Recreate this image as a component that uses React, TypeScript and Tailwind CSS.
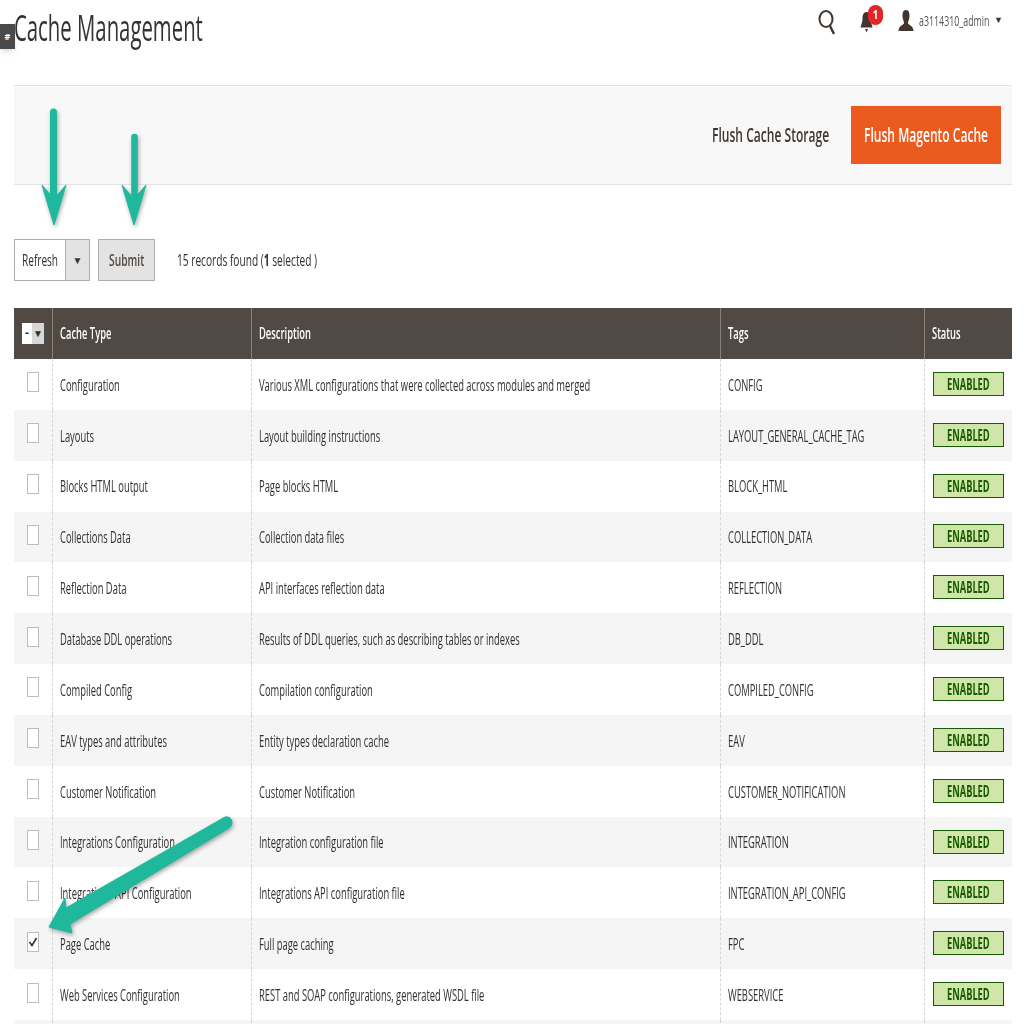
import { ReactNode } from 'react'

const rows = [
  ['Configuration', 'Various XML configurations that were collected across modules and merged', 'CONFIG'],
  ['Layouts', 'Layout building instructions', 'LAYOUT_GENERAL_CACHE_TAG'],
  ['Blocks HTML output', 'Page blocks HTML', 'BLOCK_HTML'],
  ['Collections Data', 'Collection data files', 'COLLECTION_DATA'],
  ['Reflection Data', 'API interfaces reflection data', 'REFLECTION'],
  ['Database DDL operations', 'Results of DDL queries, such as describing tables or indexes', 'DB_DDL'],
  ['Compiled Config', 'Compilation configuration', 'COMPILED_CONFIG'],
  ['EAV types and attributes', 'Entity types declaration cache', 'EAV'],
  ['Customer Notification', 'Customer Notification', 'CUSTOMER_NOTIFICATION'],
  ['Integrations Configuration', 'Integration configuration file', 'INTEGRATION'],
  ['Integrations API Configuration', 'Integrations API configuration file', 'INTEGRATION_API_CONFIG'],
  ['Page Cache', 'Full page caching', 'FPC'],
  ['Web Services Configuration', 'REST and SOAP configurations, generated WSDL file', 'WEBSERVICE'],
  ['', '', ''],
]

// the screenshot is squashed horizontally, so all text gets narrowed
function T({ children, scale = 'scale-x-[0.605]' }: { children: ReactNode; scale?: string }) {
  return <span className={`inline-block origin-left whitespace-nowrap ${scale}`}>{children}</span>
}

function Arrows() {
  return (
    <svg className="absolute inset-0 pointer-events-none drop-shadow-[1px_2px_2px_rgba(0,0,0,0.35)]" width="1024" height="1024" viewBox="0 0 1024 1024">
      <g fill="#1fb89c" stroke="#1fb89c" strokeLinejoin="round">
        <path d="M53.5 112 L53.5 195" strokeWidth="7" strokeLinecap="round" />
        <path d="M42 185 L54 199 L66 185 L54 225 Z" strokeWidth="1" />
        <path d="M134.5 137 L134.5 195" strokeWidth="6.5" strokeLinecap="round" />
        <path d="M122 185 L134 199 L146 185 L134 225 Z" strokeWidth="1" />
        <path d="M49 927 L65 898 L66 908 L225 817 Q231 816 232 822 Q232 826 229 828 L70 924 L72 933 Z" strokeWidth="1" />
      </g>
    </svg>
  )
}

function Checkbox({ checked }: { checked: boolean }) {
  return (
    <div className="ml-[13px] flex h-5 w-3 items-center justify-center border border-[#bdbdbd] bg-white">
      {checked && (
        <svg width="10" height="12" viewBox="0 0 10 12">
          <path d="M1.5 6 L4 9.5 L8.5 2" fill="none" stroke="#333" strokeWidth="1.6" />
        </svg>
      )}
    </div>
  )
}

export default function App() {
  return (
    <div className="relative h-[1024px] w-[1024px] overflow-hidden bg-white font-['Open_Sans',sans-serif] text-[#41362f]">
      {/* top bar */}
      <div className="flex h-[85px] pl-[14px]">
        <h1 className="mt-[5px] h-[46px] text-[36px] leading-[46px] text-[#333]">
          <T scale="scale-x-[0.565]">Cache Management</T>
        </h1>
        <div className="ml-auto mt-[8px] flex h-6 items-start">
          <svg className="mr-[25px] mt-[1px]" width="17" height="26" viewBox="0 0 17 26">
            <ellipse cx="8" cy="10" rx="6.5" ry="8" fill="none" stroke="#41362f" strokeWidth="2" />
            <path d="M12 17 L16 25" fill="none" stroke="#41362f" strokeWidth="2.4" />
          </svg>
          <div className="relative mr-[14px] h-6 w-[24px]">
            <svg className="mt-[3px]" width="13" height="22" viewBox="0 0 13 22">
              <path d="M6.5 1 C9.5 1 10.5 4 10.5 8 C10.5 11 12 14 12.5 16.5 L0.5 16.5 C1 14 2.5 11 2.5 8 C2.5 4 3.5 1 6.5 1 Z M5 18 L8 18 L6.5 21.5 Z" fill="#41362f" />
            </svg>
            <span className="absolute left-[8px] top-[-3px] flex h-[20px] w-[15px] items-center justify-center rounded-full bg-[#e22626] text-[12px] font-bold text-white">
              <span className="scale-x-[0.8]">1</span>
            </span>
          </div>
          <svg className="mr-[5px] mt-[1px]" width="16" height="24" viewBox="0 0 16 24">
            <path d="M8 1 C11 1 11.5 4 11.5 7 C11.5 10 10 12 10 14 C10 16 15.5 16.5 15.5 22 L0.5 22 C0.5 16.5 6 16 6 14 C6 12 4.5 10 4.5 7 C4.5 4 5 1 8 1 Z" fill="#41362f" />
          </svg>
          <div className="w-[75px] text-[15px] leading-6 text-[#555]">
            <T scale="scale-x-[0.59]">a3114310_admin</T>
          </div>
          <span className="mr-[21px] mt-[7px] text-[9px] leading-[10px] text-[#41362f]">▼</span>
        </div>
      </div>

      {/* action bar */}
      <div className="ml-[14px] mr-[12px] flex h-[100px] items-center justify-end border-y border-[#e3e3e3] bg-[#f8f8f8] pr-[11px]">
        <div className="mr-[21px] w-[118px] text-[19px] font-semibold text-[#41362f]">
          <T scale="scale-x-[0.635]">Flush Cache Storage</T>
        </div>
        <div className="flex h-[58px] w-[150px] items-center bg-[#eb5a1e] pl-[13px] text-[19px] font-semibold text-white">
          <T scale="scale-x-[0.635]">Flush Magento Cache</T>
        </div>
      </div>

      {/* mass actions */}
      <div className="ml-[14px] mt-[54px] flex h-[42px] items-center">
        <div className="flex h-[42px] w-[76px] border border-[#adadad] bg-white">
          <div className="w-[50px] shrink-0 pl-[7px] text-[16px] leading-[40px] text-[#303030]">
            <T scale="scale-x-[0.63]">Refresh</T>
          </div>
          <div className="flex w-[24px] shrink-0 items-center justify-center border-l border-[#adadad] bg-[#e3e3e3] text-[10px] text-[#41362f]">▼</div>
        </div>
        <div className="ml-[8px] h-[42px] w-[57px] border border-[#adadad] bg-[#e3e3e3] pl-[10px] text-[16px] font-semibold leading-[40px] text-[#514943]">
          <T scale="scale-x-[0.64]">Submit</T>
        </div>
        <div className="ml-[22px] text-[16px] text-[#303030]">
          <T scale="scale-x-[0.635]">
            15 records found (<b>1</b> selected )
          </T>
        </div>
      </div>

      {/* grid */}
      <table className="ml-[14px] mt-[27px] w-[998px] table-fixed border-collapse">
        <colgroup>
          <col className="w-[38px]" />
          <col className="w-[199px]" />
          <col className="w-[469px]" />
          <col className="w-[204px]" />
          <col className="w-[88px]" />
        </colgroup>
        <thead>
          <tr className="h-[51px] bg-[#514943] text-left text-[15.5px] font-bold text-white">
            <th className="border-r border-[#8a8178] p-0">
              <div className="ml-[8px] flex h-[21px] w-[22px] bg-white text-[#303030]">
                <span className="w-[10px] text-center text-[12px] leading-[20px]">-</span>
                <span className="flex w-[12px] items-center justify-center bg-[#d8d8d8] text-[10px]">▼</span>
              </div>
            </th>
            {['Cache Type', 'Description', 'Tags', 'Status'].map((h, i) => (
              <th key={h} className={`p-0 pl-[7px] font-semibold ${i < 3 ? 'border-r border-[#8a8178]' : ''}`}>
                <T>{h}</T>
              </th>
            ))}
          </tr>
        </thead>
        <tbody>
          {rows.map((r, i) => (
            <tr key={i} className={`h-[50.85px] text-[15.5px] text-[#303030] ${i % 2 ? 'bg-[#f5f5f5]' : 'bg-white'}`}>
              <td className="border-r border-dashed border-[#d6d6d6] p-0 pb-[4px]">
                <Checkbox checked={r[0] === 'Page Cache'} />
              </td>
              <td className="border-r border-dashed border-[#d6d6d6] p-0 pl-[7px] pt-[2px]"><T>{r[0]}</T></td>
              <td className="border-r border-dashed border-[#d6d6d6] p-0 pl-[7px] pt-[2px]"><T>{r[1]}</T></td>
              <td className="border-r border-dashed border-[#d6d6d6] p-0 pl-[7px] pt-[2px]"><T>{r[2]}</T></td>
              <td className="p-0 pl-[8px] pb-[1px]">
                {r[0] && (
                  <div className="h-[24px] w-[71px] border border-[#185b00] bg-[#d0e5a9] pl-[13px] text-[16px] font-bold leading-[23px] text-[#185b00]">
                    <T scale="scale-x-[0.58]">ENABLED</T>
                  </div>
                )}
              </td>
            </tr>
          ))}
        </tbody>
      </table>

      {/* hash tag and annotation arrows, drawn over the page */}
      <div className="absolute left-0 top-[24px] flex h-[25px] w-[15px] items-center justify-center bg-[#4a4a4a] text-[9px] font-bold text-white shadow-md">#</div>
      <Arrows />
    </div>
  )
}
